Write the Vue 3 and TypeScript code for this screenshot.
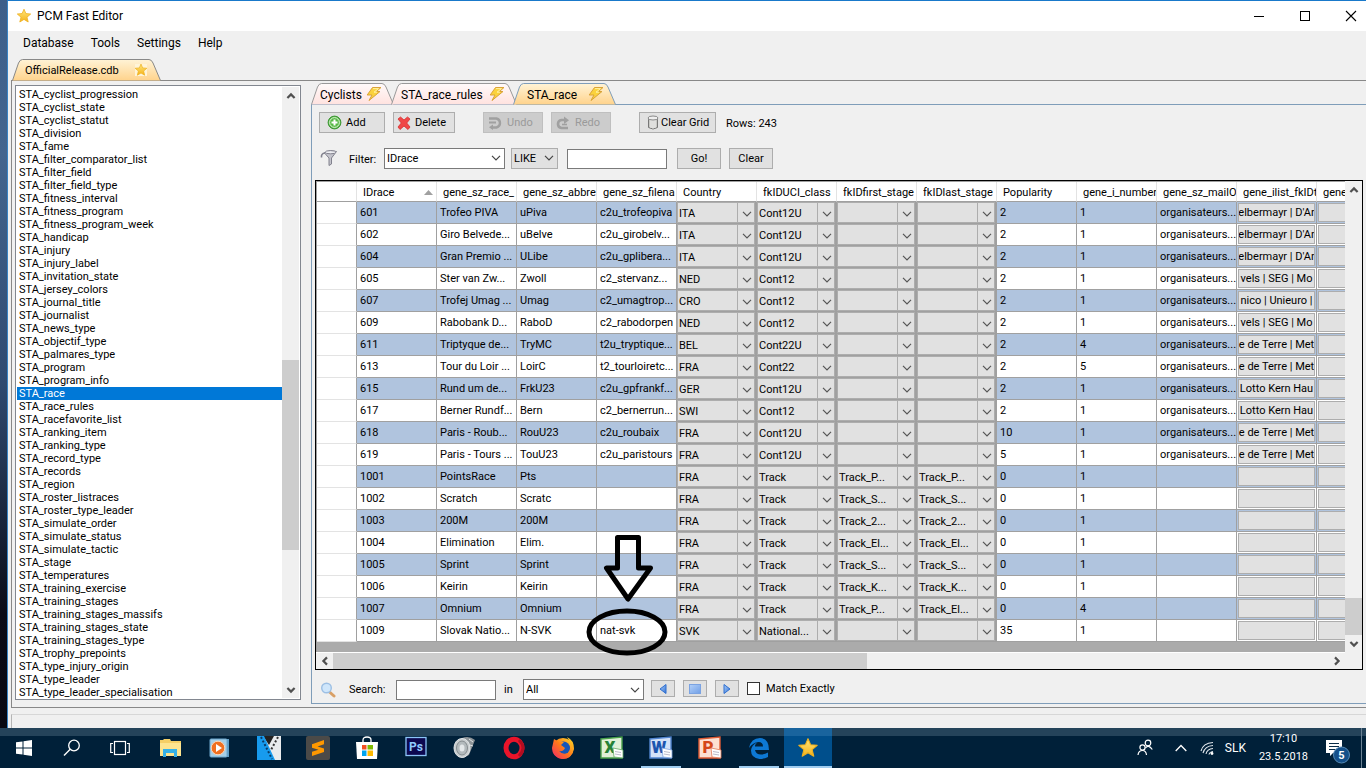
<script setup lang="ts">
import { ref } from 'vue'

interface Race {
  id: string
  name: string
  abbr: string
  file: string
  country: string
  uci: string
  first: string
  last: string
  popularity: string
  number: string
  mail: string
  teams: string
}

const menus = ['Database', 'Tools', 'Settings', 'Help']

const tables = [
  'STA_cyclist_progression', 'STA_cyclist_state', 'STA_cyclist_statut', 'STA_division', 'STA_fame',
  'STA_filter_comparator_list', 'STA_filter_field', 'STA_filter_field_type', 'STA_fitness_interval',
  'STA_fitness_program', 'STA_fitness_program_week', 'STA_handicap', 'STA_injury', 'STA_injury_label',
  'STA_invitation_state', 'STA_jersey_colors', 'STA_journal_title', 'STA_journalist', 'STA_news_type',
  'STA_objectif_type', 'STA_palmares_type', 'STA_program', 'STA_program_info', 'STA_race', 'STA_race_rules',
  'STA_racefavorite_list', 'STA_ranking_item', 'STA_ranking_type', 'STA_record_type', 'STA_records',
  'STA_region', 'STA_roster_listraces', 'STA_roster_type_leader', 'STA_simulate_order', 'STA_simulate_status',
  'STA_simulate_tactic', 'STA_stage', 'STA_temperatures', 'STA_training_exercise', 'STA_training_stages',
  'STA_training_stages_massifs', 'STA_training_stages_state', 'STA_training_stages_type',
  'STA_trophy_prepoints', 'STA_type_injury_origin', 'STA_type_leader', 'STA_type_leader_specialisation',
]
const selectedTable = ref('STA_race')

const tabs = [
  { label: 'Cyclists', width: 83 },
  { label: 'STA_race_rules', width: 126 },
  { label: 'STA_race', width: 103 },
]
const activeTab = ref('STA_race')

function tabPath(w: number): string {
  return `M0.5 21.5 L6.5 4 Q8 0.5 10.5 0.5 H${w - 12} Q${w - 9.5} 0.5 ${w - 8} 4 L${w - 0.5} 21.5`
}

const columns = [
  'IDrace', 'gene_sz_race_', 'gene_sz_abbre', 'gene_sz_filena', 'Country', 'fkIDUCI_class',
  'fkIDfirst_stage', 'fkIDlast_stage', 'Popularity', 'gene_i_number', 'gene_sz_mailO', 'gene_ilist_fkIDt', 'gene',
]

const source: string[] = [
  "601;Trofeo PIVA;uPiva;c2u_trofeopiva;ITA;Cont12U;;;2;1;organisateurs...;elbermayr | D'Ar",
  "602;Giro Belvede...;uBelve;c2u_girobelv...;ITA;Cont12U;;;2;1;organisateurs...;elbermayr | D'Ar",
  "604;Gran Premio ...;ULibe;c2u_gplibera...;ITA;Cont12U;;;2;1;organisateurs...;elbermayr | D'Ar",
  '605;Ster van Zw...;Zwoll;c2_stervanz...;NED;Cont12;;;2;1;organisateurs...;vels | SEG | Mo',
  '607;Trofej Umag ...;Umag;c2_umagtrop...;CRO;Cont12;;;2;1;organisateurs...;nico | Unieuro |',
  '609;Rabobank D...;RaboD;c2_rabodorpen;NED;Cont12;;;2;1;organisateurs...;vels | SEG | Mo',
  '611;Triptyque de...;TryMC;t2u_tryptique...;BEL;Cont22U;;;2;4;organisateurs...;e de Terre | Met',
  '613;Tour du Loir ...;LoirC;t2_tourloiretc...;FRA;Cont22;;;2;5;organisateurs...;e de Terre | Met',
  '615;Rund um de...;FrkU23;c2u_gpfrankf...;GER;Cont12U;;;2;1;organisateurs...;Lotto Kern Hau',
  '617;Berner Rundf...;Bern;c2_bernerrun...;SWI;Cont12;;;2;1;organisateurs...;Lotto Kern Hau',
  '618;Paris - Roub...;RouU23;c2u_roubaix;FRA;Cont12U;;;10;1;organisateurs...;e de Terre | Met',
  '619;Paris - Tours ...;TouU23;c2u_paristours;FRA;Cont12U;;;5;1;organisateurs...;e de Terre | Met',
  '1001;PointsRace;Pts;;FRA;Track;Track_P...;Track_P...;0;1;;',
  '1002;Scratch;Scratc;;FRA;Track;Track_S...;Track_S...;0;1;;',
  '1003;200M;200M;;FRA;Track;Track_2...;Track_2...;0;1;;',
  '1004;Elimination;Elim.;;FRA;Track;Track_El...;Track_El...;0;1;;',
  '1005;Sprint;Sprint;;FRA;Track;Track_S...;Track_S...;0;1;;',
  '1006;Keirin;Keirin;;FRA;Track;Track_K...;Track_K...;0;1;;',
  '1007;Omnium;Omnium;;FRA;Track;Track_P...;Track_El...;0;4;;',
  '1009;Slovak Natio...;N-SVK;nat-svk;SVK;National...;;;35;1;;',
]
const races: Race[] = source.map((line) => {
  const [id, name, abbr, file, country, uci, first, last, popularity, number, mail, teams] = line.split(';')
  return { id, name, abbr, file, country, uci, first, last, popularity, number, mail, teams }
})

const filterField = ref('IDrace')
const filterOp = ref('LIKE')
const filterText = ref('')
const searchText = ref('')
const searchIn = ref('All')
const matchExactly = ref(false)

const apps = [
  'Explorer', 'Media Player', 'Movie Studio', 'Sublime Text', 'Store', 'Photoshop', 'Sound', 'Opera',
  'Firefox', 'Excel', 'Word', 'PowerPoint', 'Edge', 'PCM Fast Editor',
]
const openApps = ['Word', 'Edge']
</script>

<template>
  <div class="desktop">
    <svg class="defs" width="0" height="0" aria-hidden="true">
      <defs>
        <linearGradient id="gold" x1="0" y1="0" x2="0" y2="1"><stop offset="0" stop-color="#ffe77a" /><stop offset="1" stop-color="#f5b21a" /></linearGradient>
        <linearGradient id="blue" x1="0" y1="0" x2="1" y2="1"><stop offset="0" stop-color="#a9cdfa" /><stop offset="1" stop-color="#3573d4" /></linearGradient>
        <linearGradient id="sky" x1="0" y1="0" x2="1" y2="1"><stop offset="0" stop-color="#b3d0f8" /><stop offset="1" stop-color="#719fe6" /></linearGradient>
        <linearGradient id="peach" x1="0" y1="0" x2="0" y2="1"><stop offset="0" stop-color="#fff3d6" /><stop offset="1" stop-color="#ffd38c" /></linearGradient>
        <linearGradient id="rose" x1="0" y1="0" x2="0" y2="1"><stop offset="0" stop-color="#fffafa" /><stop offset="1" stop-color="#ffe2df" /></linearGradient>
        <linearGradient id="foxfire" x1="0" y1="1" x2="1" y2="0"><stop offset="0" stop-color="#f0246b" /><stop offset="0.5" stop-color="#ff7a1a" /><stop offset="1" stop-color="#ffe226" /></linearGradient>
        <symbol id="star" viewBox="0 0 16 16"><path d="M8 1.2 9.9 5.6 14.7 6 11 9.2 12.2 14 8 11.4 3.8 14 5 9.2 1.3 6 6.1 5.6Z" fill="url(#gold)" stroke="#eeb01f" stroke-width="0.8" stroke-linejoin="round" /></symbol>
        <symbol id="bolt" viewBox="0 0 16 16"><path d="M6.5 1.5H15L10.5 5.5H14L3 14.5 6 9H1.2Z" fill="#fbd23c" stroke="#d9a33a" stroke-width="1" stroke-linejoin="round" /><path d="M7 2.6H12.5L8 6.2H11" fill="none" stroke="#fff0a0" stroke-width="1" /></symbol>
        <symbol id="chev" viewBox="0 0 10 6"><path d="M1 .8 5 4.8 9 .8" fill="none" stroke="currentColor" stroke-width="1.2" /></symbol>
        <symbol id="arrow" viewBox="0 0 10 8"><path d="M1.4 6 5 2.4 8.6 6" fill="none" stroke="#505050" stroke-width="2.2" /></symbol>
      </defs>
    </svg>

    <main class="window">
      <header class="titlebar">
        <svg class="title-icon" width="16" height="16"><use href="#star" /></svg>
        <h1>PCM Fast Editor</h1>
        <div class="captions">
          <button type="button" aria-label="Minimize"><svg width="12" height="12"><path d="M1 6.5H11" stroke="#000" /></svg></button>
          <button type="button" aria-label="Maximize"><svg width="12" height="12"><rect x="1.5" y="1.5" width="9" height="9" fill="none" stroke="#000" /></svg></button>
          <button type="button" aria-label="Close"><svg width="12" height="12"><path d="M1 1 11 11M11 1 1 11" stroke="#000" stroke-width="1.1" /></svg></button>
        </div>
      </header>

      <nav class="menubar">
        <button v-for="m in menus" :key="m" type="button">{{ m }}</button>
      </nav>

      <div class="file-tabs">
        <button class="tab file-tab" type="button">
          <svg class="tab-shape" width="149" height="22"><path :d="tabPath(149)" fill="url(#peach)" stroke="#888" /></svg>
          <span class="tab-text">OfficialRelease.cdb</span>
          <svg class="file-star" width="14" height="14"><rect x="1" y="1" width="12" height="12" fill="#fff4d8" /><use href="#star" width="14" height="14" /></svg>
        </button>
      </div>

      <section class="page">
        <div class="listbox">
          <ul>
            <li v-for="t in tables" :key="t" :class="{ selected: t === selectedTable }" @click="selectedTable = t">{{ t }}</li>
          </ul>
          <div class="vbar">
            <button type="button" aria-label="Scroll up"><svg width="10" height="8"><use href="#arrow" /></svg></button>
            <div class="list-before"></div>
            <div class="thumb list-thumb"></div>
            <div class="list-after"></div>
            <button type="button" aria-label="Scroll down"><svg class="down" width="10" height="8"><use href="#arrow" /></svg></button>
          </div>
        </div>

        <div class="editor">
          <div class="tabs" role="tablist">
            <button
              v-for="t in tabs"
              :key="t.label"
              class="tab"
              :class="{ active: t.label === activeTab }"
              type="button"
              role="tab"
              :aria-selected="t.label === activeTab"
              @click="activeTab = t.label"
            >
              <svg class="tab-shape" :width="t.width" height="22">
                <path :d="tabPath(t.width)" :fill="t.label === activeTab ? 'url(#peach)' : 'url(#rose)'" :stroke="t.label === activeTab ? '#7f9db9' : '#999'" />
              </svg>
              <span class="tab-text">{{ t.label }}</span>
              <svg class="tab-bolt" width="16" height="16"><use href="#bolt" /></svg>
            </button>
          </div>

          <div class="panel">
            <div class="toolbar">
              <button class="btn add" type="button">
                <svg width="15" height="15"><circle cx="7.5" cy="7.5" r="6.4" fill="#58b947" stroke="#3c9433" /><circle cx="7.5" cy="7.5" r="4.9" fill="none" stroke="#dcf3d4" /><path d="M7.500 4.500V10.500M4.500 7.500H10.500" stroke="#fff" stroke-width="2" /></svg>
                Add
              </button>
              <button class="btn delete" type="button">
                <svg width="14" height="14"><path d="M3.500 1 7 4 10.500 1 13 3 9.700 7 13 11 11 13.500 7 10 3 13.500 1 11 4.300 7 1 3Z" fill="#f04848" stroke="#d73030" stroke-width="0.800" /></svg>
                Delete
              </button>
              <button class="btn undo" type="button" disabled>
                <svg width="14" height="14"><path d="M1 2.500H8.500Q12 3.500 12 7T8.500 11.500H3" fill="none" stroke="#a0a0a0" stroke-width="2.400" /><path d="M1 6.500H8" stroke="#a0a0a0" stroke-width="2" /><path d="M5 8.500V14L1 11.300Z" fill="#a0a0a0" /></svg>
                Undo
              </button>
              <button class="btn redo" type="button" disabled>
                <svg width="14" height="14"><path d="M9 4H5.500Q2 4.500 2 8T5.500 12H12" fill="none" stroke="#a0a0a0" stroke-width="2.600" /><path d="M8 .5V8L13 4.200Z" fill="#a0a0a0" /><path d="M6 8.500H11" stroke="#a0a0a0" stroke-width="1.600" /></svg>
                Redo
              </button>
              <button class="btn clear-grid" type="button">
                <svg width="12" height="15"><path d="M1.500 3.500H10.500V12.500Q6 15.500 1.500 12.500Z" fill="#c9c9c6" stroke="#777" /><path d="M4 5V13M6 5V13.500M8 5V13" stroke="#f4f4f4" /><ellipse cx="6" cy="3" rx="5" ry="2" fill="#eee" stroke="#8a8a8a" /></svg>
                Clear Grid
              </button>
              <span class="rows">Rows: 243</span>
            </div>

            <div class="filterbar">
              <svg class="funnel" width="18" height="18"><path d="M4.500 3.500Q10 .5 16.500 2.500L11.500 9V15L9 16.500V9L4.500 4Z" fill="#c4c4cc" stroke="#82828e" /><ellipse cx="10.500" cy="3.200" rx="5.200" ry="1.600" fill="#eeeef2" stroke="#82828e" /><path d="M5 4Q1 4.500 1.500 8.500" fill="none" stroke="#82828e" stroke-width="1.600" /></svg>
              <label for="filter-field" class="filter-label">Filter:</label>
              <div class="combo field">
                <select id="filter-field" v-model="filterField"><option>IDrace</option></select>
                <svg width="10" height="6"><use href="#chev" /></svg>
              </div>
              <div class="combo op">
                <select v-model="filterOp" aria-label="Operator"><option>LIKE</option></select>
                <svg width="10" height="6"><use href="#chev" /></svg>
              </div>
              <input v-model="filterText" class="box filter-box" type="text" aria-label="Filter value" />
              <button class="btn small go" type="button">Go!</button>
              <button class="btn small" type="button">Clear</button>
            </div>

            <div class="grid">
              <div class="viewport">
                <table>
                  <thead>
                    <tr>
                      <th class="rowhead"></th>
                      <th v-for="c in columns" :key="c">
                        <div class="th">{{ c }}<svg v-if="c === 'IDrace'" width="9" height="5"><path d="M4.500 0 9 5H0Z" fill="#a0a0a0" /></svg></div>
                      </th>
                    </tr>
                  </thead>
                  <tbody>
                    <tr v-for="r in races" :key="r.id">
                      <th class="rowhead" scope="row"></th>
                      <td>{{ r.id }}</td>
                      <td>{{ r.name }}</td>
                      <td>{{ r.abbr }}</td>
                      <td>{{ r.file }}</td>
                      <td v-for="(v, i) in [r.country, r.uci, r.first, r.last]" :key="i" class="pick">
                        <div class="cellcombo">
                          <select :aria-label="columns[i + 4]"><option>{{ v }}</option></select>
                          <svg width="10" height="6"><use href="#chev" /></svg>
                        </div>
                      </td>
                      <td>{{ r.popularity }}</td>
                      <td>{{ r.number }}</td>
                      <td>{{ r.mail }}</td>
                      <td class="act"><button type="button" aria-label="Edit list"><span>{{ r.teams }}</span></button></td>
                      <td class="act"><button type="button" aria-label="Edit list"></button></td>
                    </tr>
                  </tbody>
                </table>
              </div>
              <div class="vbar grid-v">
                <button type="button" aria-label="Scroll up"><svg width="10" height="8"><use href="#arrow" /></svg></button>
                <div class="fill"></div>
                <div class="thumb grid-thumb"></div>
                <button type="button" aria-label="Scroll down"><svg class="down" width="10" height="8"><use href="#arrow" /></svg></button>
              </div>
              <div class="hbar">
                <button type="button" aria-label="Scroll left"><svg class="left" width="10" height="8"><use href="#arrow" /></svg></button>
                <div class="thumb h-thumb"></div>
                <div class="h-after"></div>
                <button type="button" aria-label="Scroll right"><svg class="right" width="10" height="8"><use href="#arrow" /></svg></button>
              </div>
              <svg class="annotation" width="84" height="126" aria-hidden="true">
                <path d="M32.500 5.500H53.500V36H65.500L43 67 21.500 36H32.500Z" fill="none" stroke="#000" stroke-width="5" stroke-linejoin="round" />
                <ellipse cx="42" cy="100" rx="38" ry="21" fill="none" stroke="#000" stroke-width="5" />
              </svg>
            </div>

            <div class="searchbar">
              <svg class="lens" width="16" height="16"><path d="M9 9.500 14 14" stroke="#d9a066" stroke-width="3" stroke-linecap="round" /><circle cx="6.500" cy="6" r="4.800" fill="#cfe6fb" stroke="#9cbfe4" stroke-width="1.400" /></svg>
              <label class="search-label" for="search">Search:</label>
              <input id="search" v-model="searchText" class="box search-box" type="text" />
              <label class="in-label" for="search-in">in</label>
              <div class="combo all">
                <select id="search-in" v-model="searchIn"><option>All</option></select>
                <svg width="10" height="6"><use href="#chev" /></svg>
              </div>
              <div class="steps">
                <button class="btn step" type="button" aria-label="Previous"><svg width="12" height="12"><path d="M9 1.500V10.500L3 6Z" fill="url(#blue)" stroke="#2f6fd0" /></svg></button>
                <button class="btn step" type="button" aria-label="Stop"><svg width="12" height="12"><rect x=".5" y="1.500" width="11" height="9" fill="url(#sky)" stroke="#7ba3e2" /></svg></button>
                <button class="btn step" type="button" aria-label="Next"><svg width="12" height="12"><path d="M3 1.500V10.500L9 6Z" fill="url(#blue)" stroke="#2f6fd0" /></svg></button>
                <input id="exact" v-model="matchExactly" class="check" type="checkbox" />
                <label for="exact">Match Exactly</label>
              </div>
            </div>
          </div>
        </div>
      </section>
      <footer class="status"><div></div></footer>
    </main>

    <footer class="taskbar">
      <button class="task" type="button" aria-label="Start"><svg width="16" height="16"><path d="M0 2.300 6.500 1.400V7.500H0ZM7.500 1.200 16 0V7.500H7.500ZM0 8.500H6.500V14.600L0 13.700ZM7.500 8.500H16V16L7.500 14.800Z" fill="#fff" /></svg></button>
      <button class="task" type="button" aria-label="Search"><svg width="18" height="18"><circle cx="11" cy="6.500" r="5.300" fill="none" stroke="#fff" stroke-width="1.300" /><path d="M7.200 10.300 1 16.500" stroke="#fff" stroke-width="1.400" /></svg></button>
      <button class="task" type="button" aria-label="Task view"><svg width="20" height="16"><rect x="4.500" y="1.500" width="11" height="13" fill="none" stroke="#fff" stroke-width="1.200" /><path d="M3 3.500H.7V12.500H3M17 3.500H19.300V12.500H17" fill="none" stroke="#fff" stroke-width="1.200" /></svg></button>
      <div class="apps">
        <button v-for="a in apps" :key="a" class="task" :class="{ open: openApps.includes(a), current: a === 'PCM Fast Editor' }" type="button" :aria-label="a">
          <svg width="24" height="24" viewBox="0 0 24 24">
            <g v-if="a === 'Explorer'"><path d="M1 4H4L5 3H11L12 5H22V20H1Z" fill="#f5cf66" /><path d="M1 7H22V20H1Z" fill="#fde48f" /><path d="M4 13H18V21H15V17H7V21H4Z" fill="#35b1e8" /></g>
            <g v-else-if="a === 'Media Player'"><rect x="6" y="3" width="15" height="18" fill="#5f9cc4" /><rect x="2" y="3" width="17" height="18" rx="1" fill="#a5cfe8" stroke="#6ca6cc" /><circle cx="10" cy="12" r="6.800" fill="#f07021" stroke="#fbd7b8" /><path d="M8 8V16L14 12Z" fill="#fff" /></g>
            <g v-else-if="a === 'Movie Studio'"><rect width="24" height="24" fill="#e9ebed" /><path d="M6 0H17L12 9Z" fill="#222" /><path d="M0 0H7L18 24H0Z" fill="#179bee" /><path d="M4 1 15 23" stroke="#093b67" stroke-width="2" stroke-dasharray="2 2" /><path d="M21 1 14 14" stroke="#333" stroke-width="2" stroke-dasharray="2 2" /></g>
            <g v-else-if="a === 'Sublime Text'"><rect width="24" height="24" rx="2" fill="#4b4a48" /><path d="M6 8.200 18 4V8.300L11.500 10.500 18 12.500V16L6 20V15.800L12.500 13.700 6 11.800Z" fill="#ff9800" /></g>
            <g v-else-if="a === 'Store'"><path d="M8 7V4Q8 1 12 1T16 4V7" fill="none" stroke="#fff" stroke-width="1.300" /><path d="M1 6H23L22 23H2Z" fill="#fff" /><path d="M7 9H11.500V13.500H7Z" fill="#f25022" /><path d="M12.500 9H18V13.500H12.500Z" fill="#7fba00" /><path d="M7 14.500H11.500V20H7Z" fill="#00a4ef" /><path d="M12.500 14.500H18V20H12.500Z" fill="#ffb900" /></g>
            <g v-else-if="a === 'Photoshop'"><rect x="2" y="1.500" width="20" height="18" fill="#0c0850" stroke="#8bc4f8" stroke-width="1.300" /><text x="12" y="15" text-anchor="middle" font-size="12" font-weight="700" fill="#8fcbff">Ps</text></g>
            <g v-else-if="a === 'Sound'"><path d="M9 2Q16 -1 22 4L20 9 16 19 10 22Z" fill="#8d9498" /><ellipse cx="9" cy="12" rx="8" ry="9.500" fill="#c9ced0" stroke="#e3e6e8" /><ellipse cx="9" cy="12" rx="5.500" ry="7" fill="#b3babd" stroke="#858c90" /><ellipse cx="9" cy="12" rx="2.500" ry="3.500" fill="#e4e8ea" /><path d="M16 3 20 6M17 9 20 10" stroke="#dfe3e5" /></g>
            <g v-else-if="a === 'Opera'"><ellipse cx="12" cy="12" rx="8" ry="8.800" fill="none" stroke="#e9142a" stroke-width="5" /><path d="M17 4Q25 12 17 20" fill="none" stroke="#b20d20" stroke-width="3" /></g>
            <g v-else-if="a === 'Firefox'"><circle cx="12" cy="12.500" r="10.500" fill="url(#foxfire)" /><circle cx="12.500" cy="12" r="6.500" fill="#1656b8" /><path d="M3 3 8 6 13 6 10 9 14 12Q12 16 8 15Q11 19 17 17Q23 12 16 1Q23 4 23 13Q21 23 11 23 1 21 1 12Z" fill="url(#foxfire)" /></g>
            <g v-else-if="a === 'Edge'"><path d="M2 12Q4 2 13 2 22 2.500 22 14H8Q9 18.500 14 18.500 18 18.500 21 16.500V21Q17 23 12.500 23 4 22 4 14.500 4.500 9 10 6.500 8 8.500 8 10.500H16Q16 6 11.500 6 6 6.500 2 12Z" fill="#0d78d4" /></g>
            <g v-else-if="a === 'PCM Fast Editor'"><use href="#star" x="1" y="1" width="22" height="22" /></g>
            <g v-else>
              <path d="M1 3 22 1V22H1Z" :fill="a === 'Excel' ? '#e1f0d8' : a === 'Word' ? '#d3e2f8' : '#fde0d2'" :stroke="a === 'Excel' ? '#4aa14a' : a === 'Word' ? '#5285d0' : '#df5c35'" stroke-width="1.400" />
              <text x="10" y="17" text-anchor="middle" font-size="17" font-weight="900" :fill="a === 'Excel' ? '#278238' : a === 'Word' ? '#1c55af' : '#d44719'">{{ a === 'Excel' ? 'X' : a === 'Word' ? 'W' : 'P' }}</text>
              <path d="M13 12 23 14V22L14 21Z" fill="#fff" :stroke="a === 'Excel' ? '#63a964' : a === 'Word' ? '#80a6df' : '#e37b58'" stroke-width="0.800" /><path d="M15 15.500 21 16.500M15 18 21 19" stroke="#aab" stroke-width="0.800" />
            </g>
          </svg>
        </button>
      </div>
      <div class="tray">
        <svg class="people" width="16" height="18"><g fill="none" stroke="#fff" stroke-width="1.200"><circle cx="11" cy="4" r="2.800" /><path d="M8.500 9Q11.500 5 15.300 10.500" /><circle cx="5.500" cy="8.500" r="2.600" /><path d="M1 16Q1.500 11.500 5.500 11.500 9 11.500 9.500 16" /></g></svg>
        <svg class="up" width="12" height="8"><path d="M.7 7 6 1.500 11.300 7" fill="none" stroke="#fff" stroke-width="1.300" /></svg>
        <svg class="wifi" width="14" height="14"><g fill="none" stroke="#dfe6ec" stroke-width="1.100"><path d="M1 10Q3 2 13 1.500" /><path d="M3 12Q5 5 13 4.500" /><path d="M6 13Q7 8 13 7.500" /><path d="M9 13.500Q9.500 11 13 10.500" /></g><circle cx="12" cy="12.500" r="1.400" fill="#fff" /></svg>
        <span class="lang">SLK</span>
        <div class="clock"><span>17:10</span><span>23.5.2018</span></div>
        <svg class="note" width="26" height="26"><path d="M1 2H17V15H8L5 18V15H1Z" fill="#fff" /><path d="M4 5.500H14M4 8.500H14M4 11.500H10" stroke="#0a2c48" /><circle cx="16.500" cy="17" r="8" fill="#14508a" stroke="#5689b5" /><text x="16.500" y="21" text-anchor="middle" font-size="11" font-weight="700" fill="#fff">5</text></svg>
      </div>
      <button class="show-desktop" type="button" aria-label="Show desktop"></button>
    </footer>
  </div>
</template>

<style>
html, body { margin: 0; overflow: hidden; }
</style>

<style scoped>
* { box-sizing: border-box; }
.desktop {
  height: 100vh; display: flex; flex-direction: column; overflow: hidden;
  background: linear-gradient(#3d5f8a, #43658e 20%, #2f4a70 50%, #0b0b16 80%, #07070f);
  font-family: Roboto, "Liberation Sans", sans-serif; font-size: 11px; color: #000;
}
.defs { position: absolute; }
button, input, select { font: inherit; color: inherit; margin: 0; padding: 0; border-radius: 0; }
button { border: 0; background: none; }
svg { display: block; flex: none; }

.window {
  flex: 1; min-height: 0; margin-left: 7px; display: flex; flex-direction: column;
  background: #f0f0f0; border-top: 1px solid #1979ca; border-left: 1px solid #3a84c4;
}
.titlebar { height: 30px; display: flex; align-items: center; background: #fff; font-size: 12px; }
.title-icon { margin-left: 8px; }
h1 { margin: 0 0 0 5px; font-size: 12px; font-weight: 400; }
.captions { margin-left: auto; display: flex; gap: 16px; }
.captions button { width: 30px; height: 30px; display: grid; place-items: center; }
.menubar { height: 24px; padding-left: 15px; display: flex; gap: 17px; align-items: center; font-size: 12px; }
.file-tabs { height: 25px; padding-left: 4px; display: flex; align-items: flex-end; }
.tab { position: relative; height: 22px; margin-bottom: -1px; display: grid; grid-template-columns: 1fr auto; align-items: center; text-align: left; }
.tab-shape { grid-area: 1 / 1 / 2 / 3; }
.tab-text { grid-area: 1 / 1; padding-left: 9px; padding-top: 1px; font-size: 12px; z-index: 1; }
.file-tab .tab-text { padding-left: 13px; font-size: 11px; }
.file-star { grid-area: 1 / 2; margin-right: 13px; }
.tab-bolt { grid-area: 1 / 2; margin-right: 12px; }

.page {
  flex: 1; min-height: 0; margin-left: 3px; padding: 0 0 3px 3px; display: flex; gap: 10px;
  border: 1px solid #888; border-right: 0;
}
.listbox { width: 286px; margin: 4px 0; display: flex; flex: none; background: #fff; border: 1px solid #828790; padding: 1px; }
.listbox ul { flex: 1; min-width: 0; margin: 0; padding: 1px 0 0; list-style: none; overflow: hidden; }
.listbox li { height: 13px; line-height: 13px; padding-left: 2px; white-space: nowrap; }
.listbox li.selected { background: #0078d7; color: #fff; }
.vbar { width: 17px; display: flex; flex-direction: column; background: #f0f0f0; }
.vbar button { height: 17px; display: grid; place-items: center; }
.thumb { background: #cdcdcd; }
.list-before { flex: 257; }
.list-thumb { flex: 191; }
.list-after { flex: 131; }
.down { transform: rotate(180deg); }
.left { transform: rotate(-90deg); }
.right { transform: rotate(90deg); }

.editor { flex: 1; min-width: 0; display: flex; flex-direction: column; padding-top: 2px; }
.tabs { height: 21px; display: flex; }
.tabs .tab + .tab { margin-left: -3px; }
.tabs .tab.active { z-index: 2; }
.tabs .tab + .tab.active { margin-left: -4px; }
.tabs .tab + .tab .tab-text { padding-left: 10px; }
.tabs .tab.active .tab-text { padding-left: 14px; }
.panel {
  flex: 1; min-height: 0; padding: 7px 3px 3px; display: flex; flex-direction: column;
  border: 1px solid #7f9db9; border-right: 0;
}
.toolbar { display: flex; align-items: center; padding-left: 4px; }
.btn { height: 21px; display: flex; align-items: center; background: #e1e1e1; border: 1px solid #adadad; }
.btn:disabled { background: #ccc; border-color: #bfbfbf; color: #9a9a9a; }
.add { width: 66px; padding-left: 7px; gap: 4px; }
.delete { width: 62px; margin-left: 8px; padding-left: 3px; gap: 4px; }
.undo { width: 60px; margin-left: 28px; padding-left: 4px; gap: 5px; }
.redo { width: 60px; margin-left: 8px; padding-left: 4px; gap: 5px; }
.clear-grid { width: 77px; margin-left: 28px; padding-left: 7px; gap: 2px; }
.rows { margin-left: 10px; padding-top: 2px; }
.filterbar { height: 22px; margin-top: 14px; padding-left: 5px; display: flex; align-items: center; }
.filter-label { width: 35px; margin-left: 11px; padding-top: 3px; }
.combo { height: 21px; display: grid; align-items: center; background: #fff; border: 1px solid #7a7a7a; color: #444; }
.combo select, .cellcombo select {
  grid-area: 1 / 1; width: 100%; height: 100%; appearance: none; border: 0; background: transparent;
  color: #000; padding-left: 2px; outline: none;
}
.combo svg { grid-area: 1 / 1; justify-self: end; margin-right: 3px; pointer-events: none; }
.field { width: 121px; }
.op { width: 47px; margin-left: 6px; background: #e1e1e1; border-color: #adadad; }
.box { width: 100px; height: 20px; background: #fff; border: 1px solid #7a7a7a; outline: none; }
.filter-box { margin: 2px 0 0 9px; }
.small { width: 44px; margin-left: 8px; justify-content: center; }
.go { margin-left: 10px; }

.grid {
  position: relative; flex: 1; min-height: 0; margin-top: 11px; display: grid;
  grid-template-columns: minmax(0, 1fr) 17px; grid-template-rows: minmax(0, 1fr) 17px;
  border: 1px solid #000; background: #f0f0f0;
}
.viewport { min-height: 0; overflow: hidden; background: #ababab; border-top: 1px solid #a0a0a0; border-left: 1px solid #a0a0a0; }
table { width: 1080px; table-layout: fixed; border-collapse: separate; border-spacing: 0; }
th, td {
  width: 80px; height: 22px; padding: 0 2px; text-align: left; font-weight: 400; white-space: nowrap; overflow: hidden;
  background: #fff; border-right: 1px solid #a0a0a0; border-bottom: 1px solid #a0a0a0; line-height: 20px;
}
td { padding: 1px 0 0 3px; }
.rowhead { width: 40px; }
tbody .rowhead { border-bottom-color: #e3e3e3; }
thead th { height: 20px; padding: 0; border-right-color: #e3e3e3; }
.th { height: 19px; line-height: 19px; margin: 0 0 0 6px; padding-top: 1px; overflow: hidden; display: flex; align-items: center; justify-content: space-between; }
.th svg { margin-right: 3px; }
tbody tr:nth-child(odd) td { background: #b0c4de; }
tbody tr td.pick { padding: 0 1px 0 0; background: #a0a0a0; }
.cellcombo {
  height: 21px; display: grid; grid-template-columns: 1fr; align-items: center; color: #555;
  background: linear-gradient(#adadad, #adadad) right 16px top / 1px 100% no-repeat #e1e1e1; border: 1px solid #adadad;
}
.cellcombo select { padding: 1px 0 0 1px; }
.cellcombo svg { grid-area: 1 / 1; justify-self: end; margin-right: 2px; pointer-events: none; }
td.act { padding: 1px; }
td.act button { display: block; width: 100%; height: 19px; padding: 0; background: #e1e1e1; border: 1px solid #adadad; }
td.act span { display: flex; justify-content: center; overflow: hidden; white-space: pre; line-height: 18px; height: 17px; }
.fill { flex: 1; }
.grid-thumb { height: 37px; }
.hbar { grid-column: 1 / 2; display: flex; border-top: 1px solid #fff; }
.hbar button { width: 17px; display: grid; place-items: center; }
.h-thumb { flex: 534; }
.h-after { flex: 461; }
.annotation { position: absolute; left: 269px; top: 351px; pointer-events: none; }

.searchbar { height: 21px; margin-top: 9px; padding-left: 5px; display: flex; align-items: center; }
.search-label { width: 47px; margin-left: 13px; }
.in-label { width: 19px; margin-left: 8px; }
.all { width: 121px; }
.steps { display: flex; align-items: center; align-self: flex-start; margin-left: 7px; gap: 8px; padding-top: 1px; }
.step { width: 24px; height: 17px; justify-content: center; }
.check { appearance: none; width: 13px; height: 13px; margin-right: -2px; background: #fff; border: 1px solid #333; }
.status { height: 20px; padding-top: 6px; }
.status div { height: 14px; margin-left: 3px; border-top: 1px solid #d7d7d7; border-left: 1px solid #b5b5b5; }

.taskbar {
  height: 40px; flex: none; display: flex; align-items: stretch; color: #fff;
  background: linear-gradient(#24435a 8px, #002039 8px);
}
.task { width: 48px; height: 40px; display: grid; place-items: center; }
.apps { margin-left: 3px; display: flex; gap: 1px; }
.open { background: linear-gradient(#a0cdf0, #a0cdf0) center bottom / 40px 2px no-repeat; }
.current { background: linear-gradient(#a0cdf0, #a0cdf0) center bottom / 100% 2px no-repeat, linear-gradient(#19649e 8px, #004f8c 8px); }
.tray { margin-left: auto; display: flex; align-items: center; padding-right: 10px; }
.up { margin-left: 22px; }
.wifi { margin-left: 13px; }
.lang { margin-left: 11px; font-size: 12px; }
.clock { height: 40px; margin: 0 17px 0 13px; display: flex; flex-direction: column; align-items: center; justify-content: center; line-height: 18px; }
.note { margin-top: 6px; }
.show-desktop { width: 5px; border-left: 1px solid #6b8294; }
</style>
